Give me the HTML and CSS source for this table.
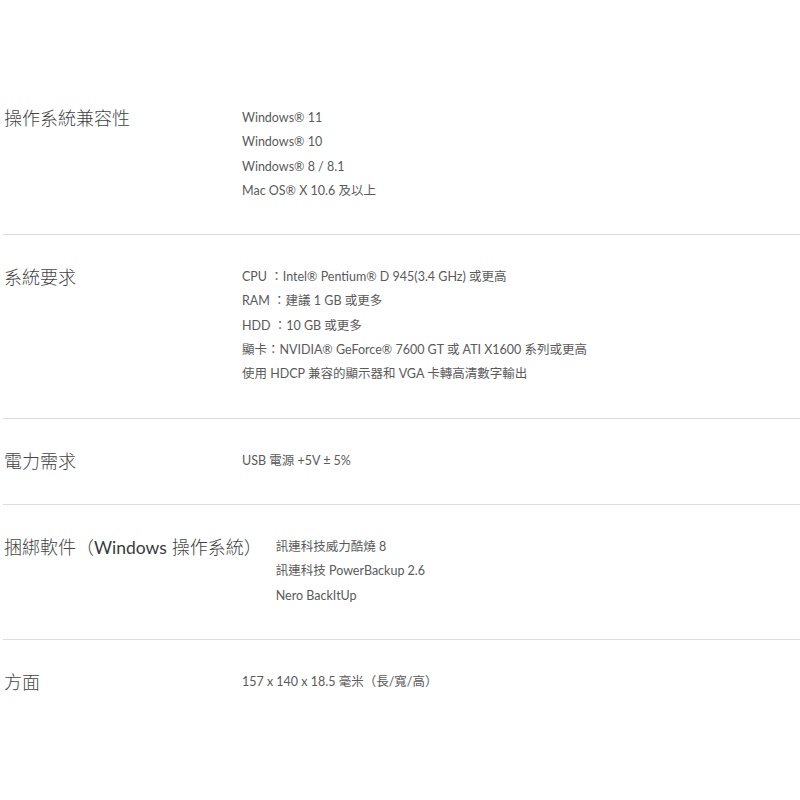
FILE: index.html
```html
<!DOCTYPE html>
<html>
<head>
    <title>規格</title>
    <link rel="stylesheet" href="styles.css">
</head>
<body>
    <div class="specs">
        <div class="spec-row">
            <div class="spec-label">操作系統兼容性</div>
            <div class="spec-values">
                <p>Windows® 11</p>
                <p>Windows® 10</p>
                <p>Windows® 8 / 8.1</p>
                <p>Mac OS® X 10.6 及以上</p>
            </div>
        </div>

        <div class="spec-row">
            <div class="spec-label">系統要求</div>
            <div class="spec-values">
                <p>CPU ：Intel® Pentium® D 945(3.4 GHz) 或更高</p>
                <p>RAM ：建議 1 GB 或更多</p>
                <p>HDD ：10 GB 或更多</p>
                <p>顯卡：NVIDIA® GeForce® 7600 GT 或 ATI X1600 系列或更高</p>
                <p>使用 HDCP 兼容的顯示器和 VGA 卡轉高清數字輸出</p>
            </div>
        </div>

        <div class="spec-row">
            <div class="spec-label">電力需求</div>
            <div class="spec-values">
                <p>USB 電源 +5V ± 5%</p>
            </div>
        </div>

        <div class="spec-row">
            <div class="spec-label">捆綁軟件（<span class="latin">Windows</span> 操作系統）</div>
            <div class="spec-values">
                <p>訊連科技威力酷燒 8</p>
                <p>訊連科技 PowerBackup 2.6</p>
                <p>Nero BackItUp</p>
            </div>
        </div>

        <div class="spec-row">
            <div class="spec-label">方面</div>
            <div class="spec-values">
                <p>157 x 140 x 18.5 毫米（長/寬/高）</p>
            </div>
        </div>
    </div>
</body>
</html>
```

FILE: styles.css
```css
body {
    margin: 0;
    padding: 0;
    background-color: white;
    font-family: Lato, "Noto Sans CJK TC", sans-serif;
}

.specs {
    margin-top: 76px;
    padding-left: 3px;
}

.spec-row {
    display: flex;
    gap: 14px;
    padding: 30px 0 31px 0;
    border-top: 1px solid #dcdcdc;
}

    .spec-row:first-child {
        border-top: none;
    }

.spec-label {
    flex: 0 0 auto;
    min-width: 224px;
    padding-left: 1px;
    font-size: 18px;
    line-height: 24.3px;
    font-weight: 300;
    color: #444;
}

    .spec-label .latin {
        font-size: 17.5px;
        font-weight: 400;
        color: #3a3a3a;
    }

.spec-values {
    font-size: 12.5px;
    line-height: 24.3px;
    color: #5a5a5a;
}

    .spec-values p {
        margin: 0;
    }
```
